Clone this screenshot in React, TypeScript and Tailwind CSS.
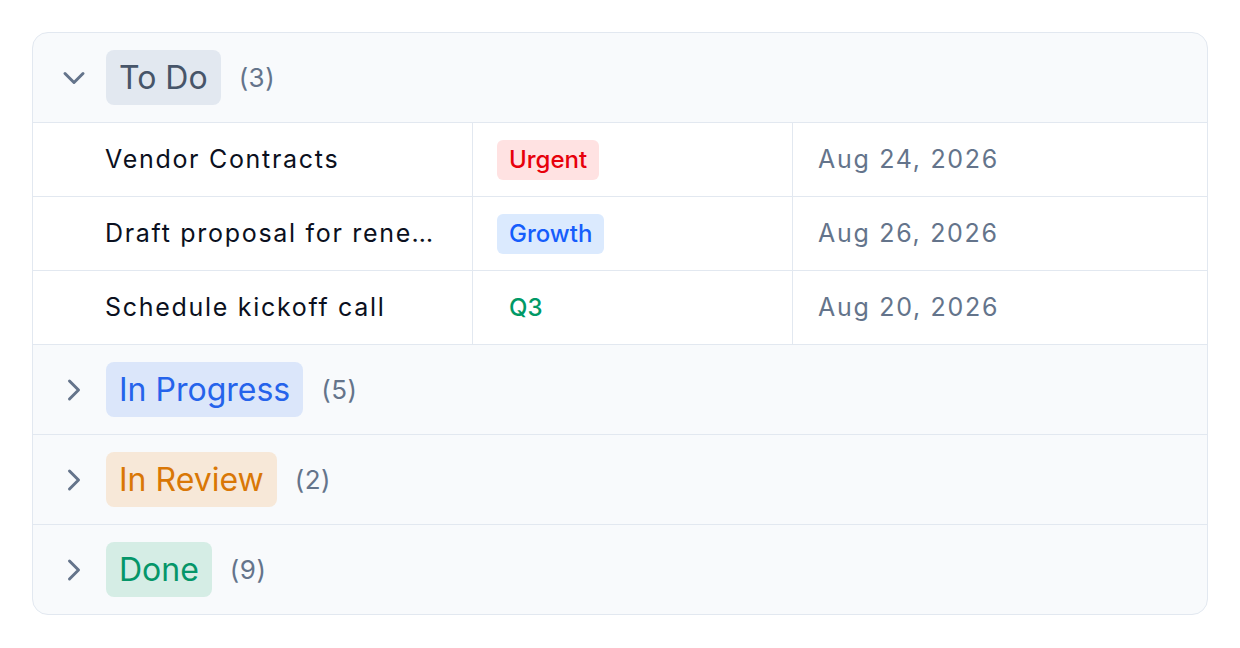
import { ChevronDown, ChevronRight } from "lucide-react";

type Tag = { label: string; className: string };

type Task = { title: string; tag: Tag; due: string };

type Group = {
  name: string;
  count: number;
  open: boolean;
  badge: string;
  tasks: Task[];
};

const GROUPS: Group[] = [
  {
    name: "To Do",
    count: 3,
    open: true,
    badge: "bg-[#e2e8f0] text-[#475569]",
    tasks: [
      { title: "Vendor Contracts", tag: { label: "Urgent", className: "bg-[#ffe2e2] text-[#e7000b]" }, due: "Aug 24, 2026" },
      { title: "Draft proposal for renewal terms", tag: { label: "Growth", className: "bg-[#dbeafe] text-[#155dfc]" }, due: "Aug 26, 2026" },
      { title: "Schedule kickoff call", tag: { label: "Q3", className: "bg-transparent text-[#009966]" }, due: "Aug 20, 2026" },
    ],
  },
  { name: "In Progress", count: 5, open: false, badge: "bg-[#dbe6fa] text-[#2563eb]", tasks: [] },
  { name: "In Review", count: 2, open: false, badge: "bg-[#f7e8d8] text-[#d97706]", tasks: [] },
  { name: "Done", count: 9, open: false, badge: "bg-[#d5ede5] text-[#059669]", tasks: [] },
];

export default function App() {
  return (
    <div className="p-8 bg-white font-['Inter','Noto_Sans',sans-serif]">
      <div className="rounded-2xl border border-[#e2e8f0] bg-[#f8fafc] overflow-hidden">
        {GROUPS.map((g, gi) => (
          <div key={g.name} className={gi < GROUPS.length - 1 ? "border-b border-[#e2e8f0]" : ""}>
            {/* Group header */}
            <div className="flex items-center h-[89px] pl-[23px]">
              <div className="w-[50px] flex items-center">
                {g.open ? (
                  <ChevronDown size={36} strokeWidth={2} className="text-[#64748b]" />
                ) : (
                  <ChevronRight size={36} strokeWidth={2} className="text-[#64748b]" />
                )}
              </div>
              <span className={`rounded-lg px-[13px] h-[55px] flex items-center text-[32px] ${g.badge}`}>
                {g.name}
              </span>
              <span className="ml-[18px] text-[26px] tracking-[0.5px] text-[#64748b]">({g.count})</span>
            </div>

            {/* Rows */}
            {g.open && (
              <div className="bg-white">
                {g.tasks.map((t) => (
                  <div key={t.title} className="flex h-[74px] border-t border-[#e2e8f0]">
                    <div className="w-[440px] shrink-0 pl-[72px] pr-6 flex items-center border-r border-[#e2e8f0]">
                      <span className="truncate text-[25px] tracking-[1.7px] text-[#0b1020]">{t.title}</span>
                    </div>
                    <div className="w-[320px] shrink-0 px-6 flex items-center border-r border-[#e2e8f0]">
                      <span className={`rounded-md px-[12px] h-10 flex items-center text-[24px] font-medium ${t.tag.className}`}>
                        {t.tag.label}
                      </span>
                    </div>
                    <div className="flex-1 px-[25px] flex items-center text-[25px] tracking-[1.7px] text-[#64748b]">
                      {t.due}
                    </div>
                  </div>
                ))}
              </div>
            )}
          </div>
        ))}
      </div>
    </div>
  );
}
